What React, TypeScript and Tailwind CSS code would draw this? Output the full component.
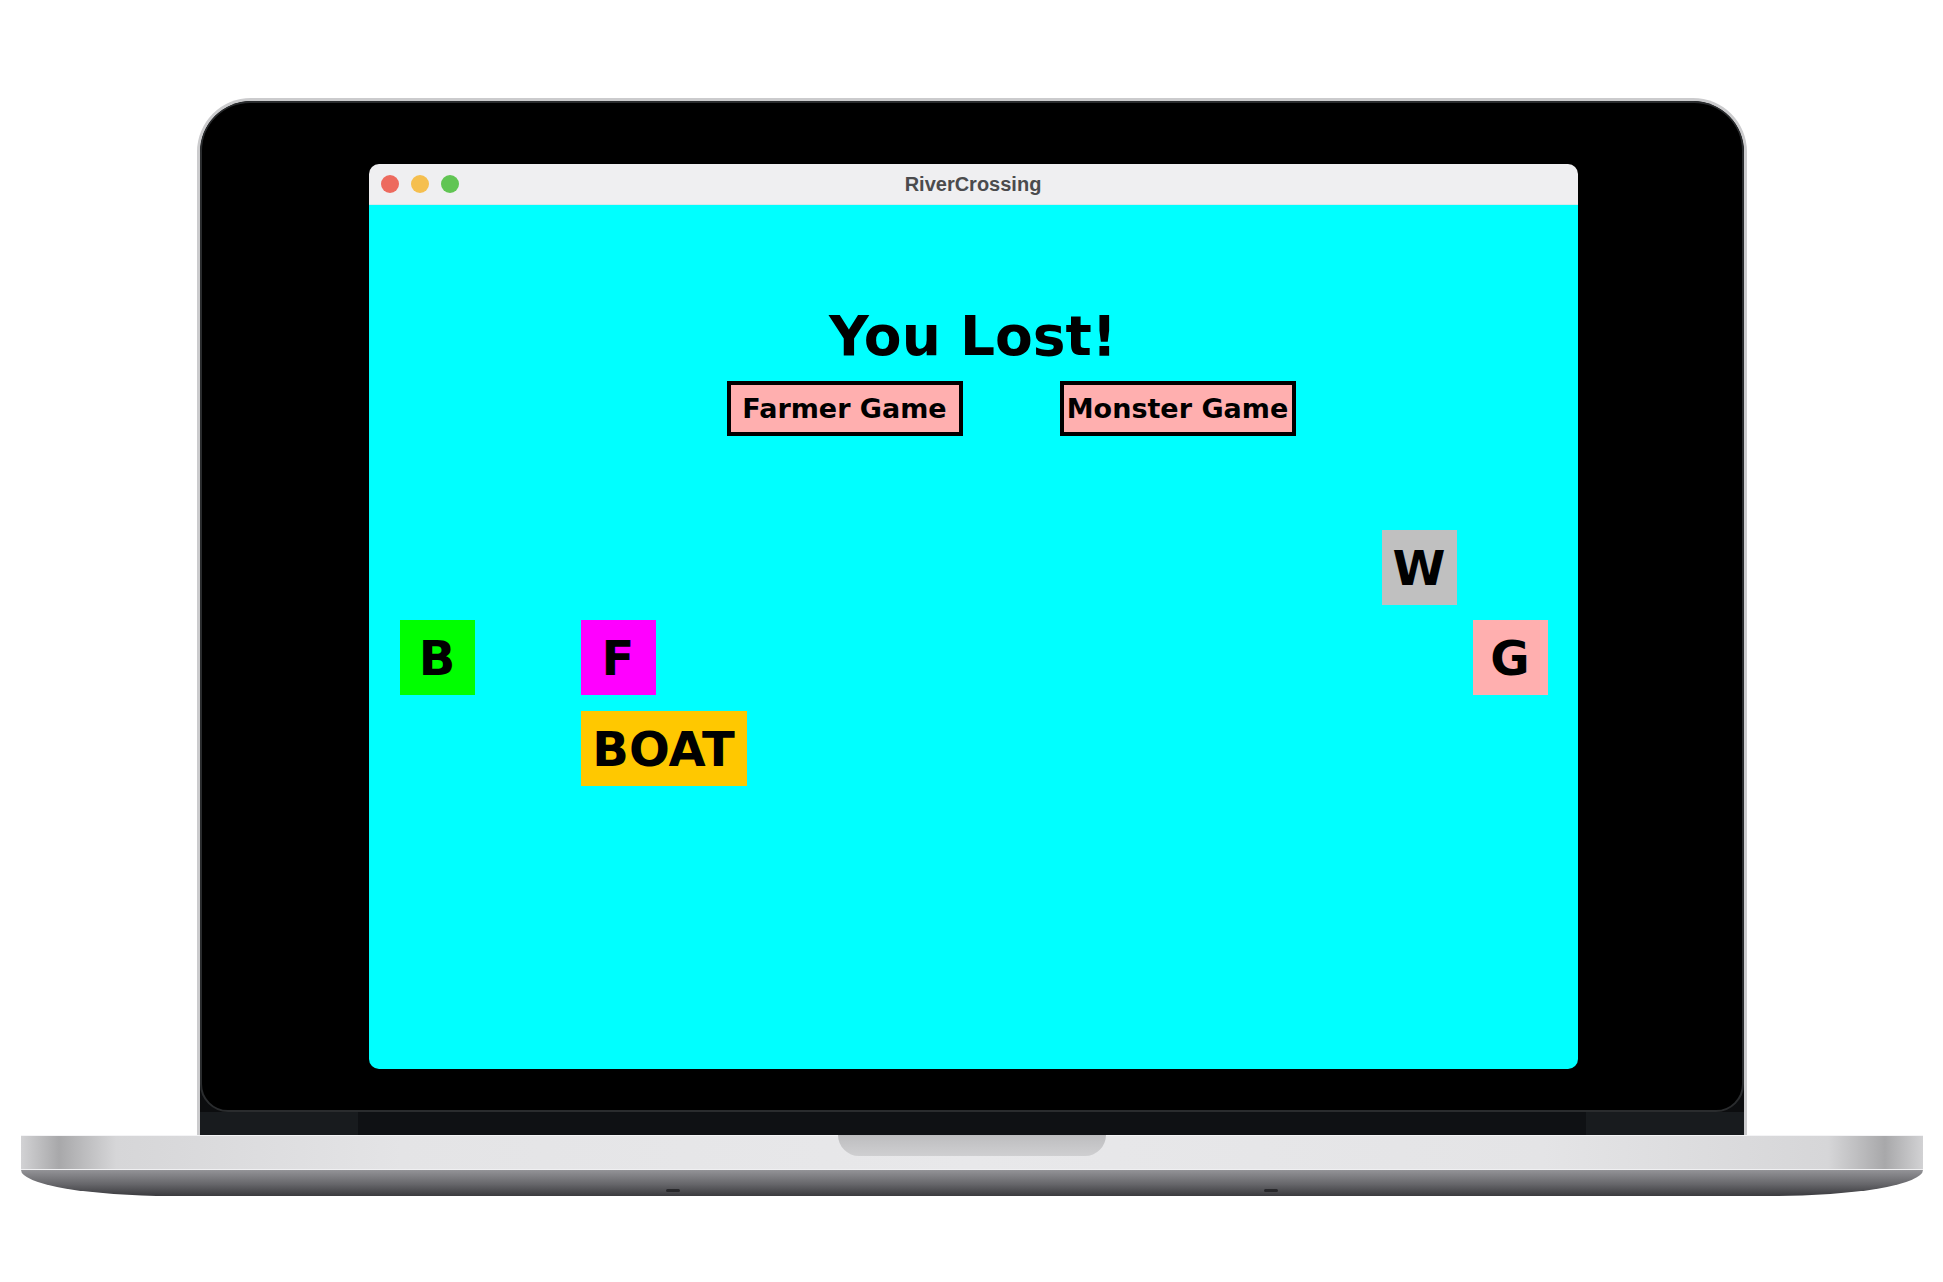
import React from 'react';

type Piece = {
  label: string;
  x: number;
  y: number;
  wide?: boolean;
  color: string;
};

// game pieces sit on a free board, so their place is the content
const pieces: Piece[] = [
  { label: 'B', x: 31, y: 415, color: 'bg-[#00ff00]' },
  { label: 'F', x: 212, y: 415, color: 'bg-[#ff00ff]' },
  { label: 'BOAT', x: 212, y: 506, wide: true, color: 'bg-[#ffc800]' },
  { label: 'W', x: 1013, y: 325, color: 'bg-[#c0c0c0]' },
  { label: 'G', x: 1104, y: 415, color: 'bg-[#ffafaf]' },
];

const GameButton: React.FC<{ text: string }> = ({ text }) => {
  return (
    <button className="w-[236px] h-[55px] border-4 border-black bg-[#ffafaf] flex items-center justify-center text-[27px] leading-none font-bold text-black font-['DejaVu_Sans',sans-serif]">
      {text}
    </button>
  );
};

const GameWindow: React.FC = () => {
  return (
    <div className="w-[1209px] h-[905px] rounded-[10px] overflow-hidden flex flex-col">
      <div className="h-[41px] bg-[#efeff1] border-b border-[#d6e9ea] relative flex items-center pl-[12px] gap-[12px]">
        <span className="w-[18px] h-[18px] rounded-full bg-[#ed6a5e]" />
        <span className="w-[18px] h-[18px] rounded-full bg-[#f5bf4f]" />
        <span className="w-[18px] h-[18px] rounded-full bg-[#61c554]" />
        <div className="absolute inset-0 flex items-center justify-center text-[20px] font-bold text-[#4b4b4d] font-['Liberation_Sans',sans-serif]">
          RiverCrossing
        </div>
      </div>
      <div className="flex-1 bg-[#00ffff] relative flex flex-col items-center">
        <h1 className="pt-[104px] text-[55px] leading-none font-bold text-black font-['DejaVu_Sans',sans-serif]">
          You Lost!
        </h1>
        <div className="mt-[17px] pl-[76px] flex gap-[97px]">
          <GameButton text="Farmer Game" />
          <GameButton text="Monster Game" />
        </div>
        {pieces.map((p) => (
          <div
            key={p.label}
            className={`absolute h-[75px] flex items-center justify-center text-[48px] leading-none font-bold text-black font-['DejaVu_Sans',sans-serif] ${p.color} ${p.wide ? 'w-[166px]' : 'w-[75px]'}`}
            style={{ left: p.x, top: p.y }}
          >
            {p.label}
          </div>
        ))}
      </div>
    </div>
  );
};

const App: React.FC = () => {
  return (
    <div className="w-[1943px] h-[1282px] bg-white overflow-hidden flex flex-col items-center pt-[98px]">
      {/* lid */}
      <div className="w-[1550px] h-[1037px] rounded-t-[54px] bg-[#cbcbcd] px-[3px] pt-[3px] flex flex-col">
        <div className="flex-1 rounded-t-[51px] bg-[#0c0d0f] flex flex-col overflow-hidden">
          <div className="flex-1 bg-black rounded-t-[50px] rounded-b-[28px] border-2 border-[#2a2c2e] pt-[61px] pl-[167px]">
            <GameWindow />
          </div>
          <div className="h-[23px] bg-[#181b1e] flex justify-center">
            <div className="w-[1228px] h-full bg-[#0f1114]" />
          </div>
        </div>
      </div>
      {/* base */}
      <div className="w-[1902px] h-[61px] flex flex-col">
        <div className="h-[35px] border-t border-[#f4f4f6] border-b border-b-[#f0f0f2] bg-[linear-gradient(90deg,#d2d2d4_0%,#a8a8aa_2%,#d6d6d8_5%,#e4e4e6_20%,#e8e8ea_50%,#e4e4e6_80%,#d6d6d8_95%,#a8a8aa_98%,#d2d2d4_100%)] flex justify-center">
          <div className="w-[268px] h-[21px] -mt-px rounded-b-[22px] bg-[linear-gradient(180deg,#bdbdbf,#cfcfd1)]" />
        </div>
        <div className="h-[26px] rounded-bl-[150px_26px] rounded-br-[150px_26px] bg-[linear-gradient(180deg,#939397_0%,#66666a_55%,#3a3a3e_100%)] flex justify-between items-end px-[645px] pb-[4px]">
          <span className="w-[14px] h-[3px] rounded-full bg-[#28282b]" />
          <span className="w-[14px] h-[3px] rounded-full bg-[#28282b]" />
        </div>
      </div>
    </div>
  );
};

export default App;
